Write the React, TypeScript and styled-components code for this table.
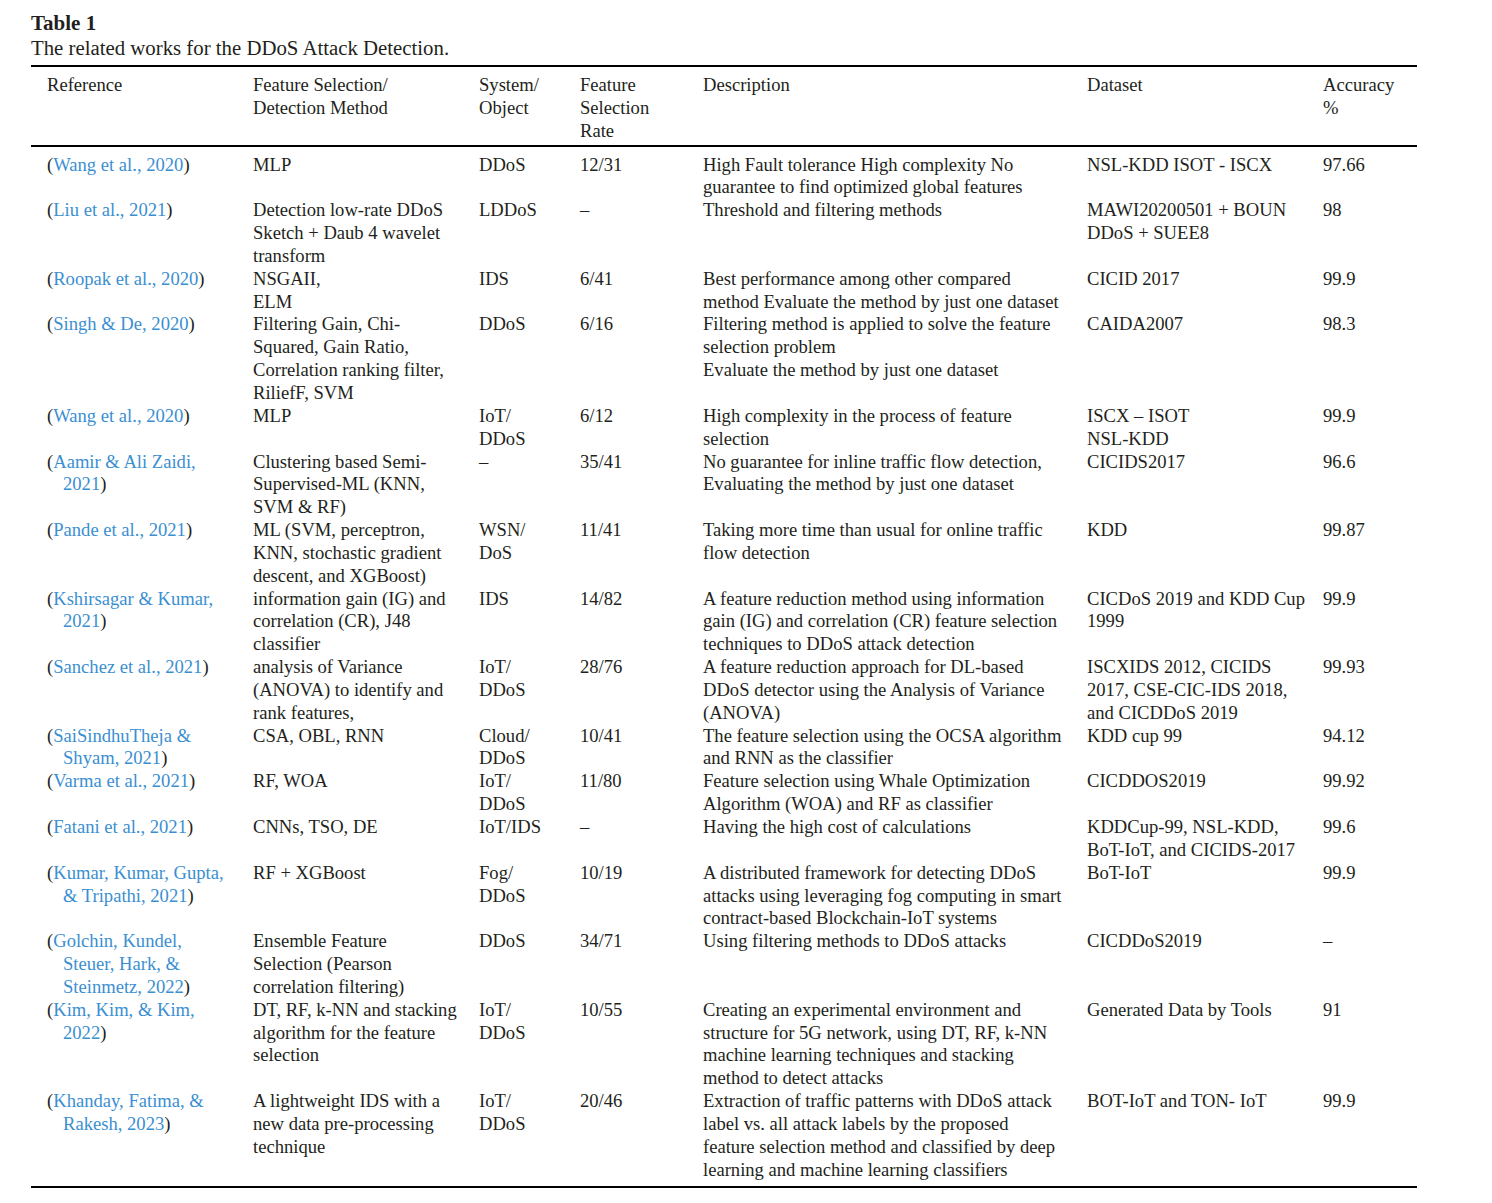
import React from "react";
import styled, { createGlobalStyle } from "styled-components";

const GlobalStyle = createGlobalStyle`
  body {
    margin: 0;
    background: #ffffff;
    color: #231f20;
    font-family: "Liberation Serif", "DejaVu Serif", serif;
  }
`;

const Page = styled.div`
  width: 1492px;
  padding: 10px 0 0 31px;
  box-sizing: border-box;
`;

const Title = styled.div`
  font-weight: bold;
  font-size: 21px;
  line-height: 26px;
`;

const Caption = styled.div`
  font-size: 20.8px;
  line-height: 24px;
  margin-bottom: 5px;
`;

const Table = styled.table`
  width: 1386px;
  border-collapse: collapse;
  table-layout: fixed;
  border-top: 2px solid #000;
  border-bottom: 2px solid #000;
  font-size: 18.6px;
  line-height: 22.85px;
`;

const HeadRow = styled.tr`
  border-bottom: 2px solid #000;
`;

const Th = styled.th`
  text-align: left;
  font-weight: normal;
  vertical-align: top;
  padding: 7px 0 2px;
  white-space: nowrap;
  &:first-child {
    padding-left: 16px;
  }
`;

const Td = styled.td<{ $first?: boolean; $last?: boolean }>`
  vertical-align: top;
  padding: 0;
  padding-top: ${(p) => (p.$first ? "7px" : "0")};
  padding-bottom: ${(p) => (p.$last ? "4px" : "0")};
  white-space: nowrap;
`;

const RefCell = styled(Td)`
  padding-left: 32px;
  text-indent: -16px;
`;

const Cite = styled.span`
  color: #3b8fd1;
`;

type Row = {
  ref: string[];
  method: string[];
  system: string[];
  rate: string;
  desc: string[];
  dataset: string[];
  acc: string;
};

const rows: Row[] = [
  { ref: ["Wang et al., 2020"], method: ["MLP"], system: ["DDoS"], rate: "12/31", desc: ["High Fault tolerance High complexity No", "guarantee to find optimized global features"], dataset: ["NSL-KDD ISOT - ISCX"], acc: "97.66" },
  { ref: ["Liu et al., 2021"], method: ["Detection low-rate DDoS", "Sketch + Daub 4 wavelet", "transform"], system: ["LDDoS"], rate: "–", desc: ["Threshold and filtering methods"], dataset: ["MAWI20200501 + BOUN", "DDoS + SUEE8"], acc: "98" },
  { ref: ["Roopak et al., 2020"], method: ["NSGAII,", "ELM"], system: ["IDS"], rate: "6/41", desc: ["Best performance among other compared", "method Evaluate the method by just one dataset"], dataset: ["CICID 2017"], acc: "99.9" },
  { ref: ["Singh & De, 2020"], method: ["Filtering Gain, Chi-", "Squared, Gain Ratio,", "Correlation ranking filter,", "RiliefF, SVM"], system: ["DDoS"], rate: "6/16", desc: ["Filtering method is applied to solve the feature", "selection problem", "Evaluate the method by just one dataset"], dataset: ["CAIDA2007"], acc: "98.3" },
  { ref: ["Wang et al., 2020"], method: ["MLP"], system: ["IoT/", "DDoS"], rate: "6/12", desc: ["High complexity in the process of feature", "selection"], dataset: ["ISCX – ISOT", "NSL-KDD"], acc: "99.9" },
  { ref: ["Aamir & Ali Zaidi,", "2021"], method: ["Clustering based Semi-", "Supervised-ML (KNN,", "SVM & RF)"], system: ["–"], rate: "35/41", desc: ["No guarantee for inline traffic flow detection,", "Evaluating the method by just one dataset"], dataset: ["CICIDS2017"], acc: "96.6" },
  { ref: ["Pande et al., 2021"], method: ["ML (SVM, perceptron,", "KNN, stochastic gradient", "descent, and XGBoost)"], system: ["WSN/", "DoS"], rate: "11/41", desc: ["Taking more time than usual for online traffic", "flow detection"], dataset: ["KDD"], acc: "99.87" },
  { ref: ["Kshirsagar & Kumar,", "2021"], method: ["information gain (IG) and", "correlation (CR), J48", "classifier"], system: ["IDS"], rate: "14/82", desc: ["A feature reduction method using information", "gain (IG) and correlation (CR) feature selection", "techniques to DDoS attack detection"], dataset: ["CICDoS 2019 and KDD Cup", "1999"], acc: "99.9" },
  { ref: ["Sanchez et al., 2021"], method: ["analysis of Variance", "(ANOVA) to identify and", "rank features,"], system: ["IoT/", "DDoS"], rate: "28/76", desc: ["A feature reduction approach for DL-based", "DDoS detector using the Analysis of Variance", "(ANOVA)"], dataset: ["ISCXIDS 2012, CICIDS", "2017, CSE-CIC-IDS 2018,", "and CICDDoS 2019"], acc: "99.93" },
  { ref: ["SaiSindhuTheja &", "Shyam, 2021"], method: ["CSA, OBL, RNN"], system: ["Cloud/", "DDoS"], rate: "10/41", desc: ["The feature selection using the OCSA algorithm", "and RNN as the classifier"], dataset: ["KDD cup 99"], acc: "94.12" },
  { ref: ["Varma et al., 2021"], method: ["RF, WOA"], system: ["IoT/", "DDoS"], rate: "11/80", desc: ["Feature selection using Whale Optimization", "Algorithm (WOA) and RF as classifier"], dataset: ["CICDDOS2019"], acc: "99.92" },
  { ref: ["Fatani et al., 2021"], method: ["CNNs, TSO, DE"], system: ["IoT/IDS"], rate: "–", desc: ["Having the high cost of calculations"], dataset: ["KDDCup-99, NSL-KDD,", "BoT-IoT, and CICIDS-2017"], acc: "99.6" },
  { ref: ["Kumar, Kumar, Gupta,", "& Tripathi, 2021"], method: ["RF + XGBoost"], system: ["Fog/", "DDoS"], rate: "10/19", desc: ["A distributed framework for detecting DDoS", "attacks using leveraging fog computing in smart", "contract-based Blockchain-IoT systems"], dataset: ["BoT-IoT"], acc: "99.9" },
  { ref: ["Golchin, Kundel,", "Steuer, Hark, &", "Steinmetz, 2022"], method: ["Ensemble Feature", "Selection (Pearson", "correlation filtering)"], system: ["DDoS"], rate: "34/71", desc: ["Using filtering methods to DDoS attacks"], dataset: ["CICDDoS2019"], acc: "–" },
  { ref: ["Kim, Kim, & Kim,", "2022"], method: ["DT, RF, k-NN and stacking", "algorithm for the feature", "selection"], system: ["IoT/", "DDoS"], rate: "10/55", desc: ["Creating an experimental environment and", "structure for 5G network, using DT, RF, k-NN", "machine learning techniques and stacking", "method to detect attacks"], dataset: ["Generated Data by Tools"], acc: "91" },
  { ref: ["Khanday, Fatima, &", "Rakesh, 2023"], method: ["A lightweight IDS with a", "new data pre-processing", "technique"], system: ["IoT/", "DDoS"], rate: "20/46", desc: ["Extraction of traffic patterns with DDoS attack", "label vs. all attack labels by the proposed", "feature selection method and classified by deep", "learning and machine learning classifiers"], dataset: ["BOT-IoT and TON- IoT"], acc: "99.9" },
];

const Lines: React.FC<{ lines: string[] }> = ({ lines }) => (
  <>
    {lines.map((l, i) => (
      <React.Fragment key={i}>
        {i > 0 && <br />}
        {l}
      </React.Fragment>
    ))}
  </>
);

const RefLines: React.FC<{ lines: string[] }> = ({ lines }) => (
  <>
    (
    {lines.map((l, i) => (
      <React.Fragment key={i}>
        {i > 0 && <br />}
        <Cite>{l}</Cite>
      </React.Fragment>
    ))}
    )
  </>
);

const App: React.FC = () => {
  return (
    <>
      <GlobalStyle />
      <Page>
        <Title>Table 1</Title>
        <Caption>The related works for the DDoS Attack Detection.</Caption>
        <Table>
          <colgroup>
            <col style={{ width: 222 }} />
            <col style={{ width: 226 }} />
            <col style={{ width: 101 }} />
            <col style={{ width: 123 }} />
            <col style={{ width: 384 }} />
            <col style={{ width: 236 }} />
            <col style={{ width: 94 }} />
          </colgroup>
          <thead>
            <HeadRow>
              <Th>Reference</Th>
              <Th>
                Feature Selection/
                <br />
                Detection Method
              </Th>
              <Th>
                System/
                <br />
                Object
              </Th>
              <Th>
                Feature
                <br />
                Selection
                <br />
                Rate
              </Th>
              <Th>Description</Th>
              <Th>Dataset</Th>
              <Th>
                Accuracy
                <br />%
              </Th>
            </HeadRow>
          </thead>
          <tbody>
            {rows.map((r, i) => {
              const first = i === 0;
              const last = i === rows.length - 1;
              return (
                <tr key={i}>
                  <RefCell $first={first} $last={last}>
                    <RefLines lines={r.ref} />
                  </RefCell>
                  <Td $first={first} $last={last}>
                    <Lines lines={r.method} />
                  </Td>
                  <Td $first={first} $last={last}>
                    <Lines lines={r.system} />
                  </Td>
                  <Td $first={first} $last={last}>{r.rate}</Td>
                  <Td $first={first} $last={last}>
                    <Lines lines={r.desc} />
                  </Td>
                  <Td $first={first} $last={last}>
                    <Lines lines={r.dataset} />
                  </Td>
                  <Td $first={first} $last={last}>{r.acc}</Td>
                </tr>
              );
            })}
          </tbody>
        </Table>
      </Page>
    </>
  );
};

export default App;
